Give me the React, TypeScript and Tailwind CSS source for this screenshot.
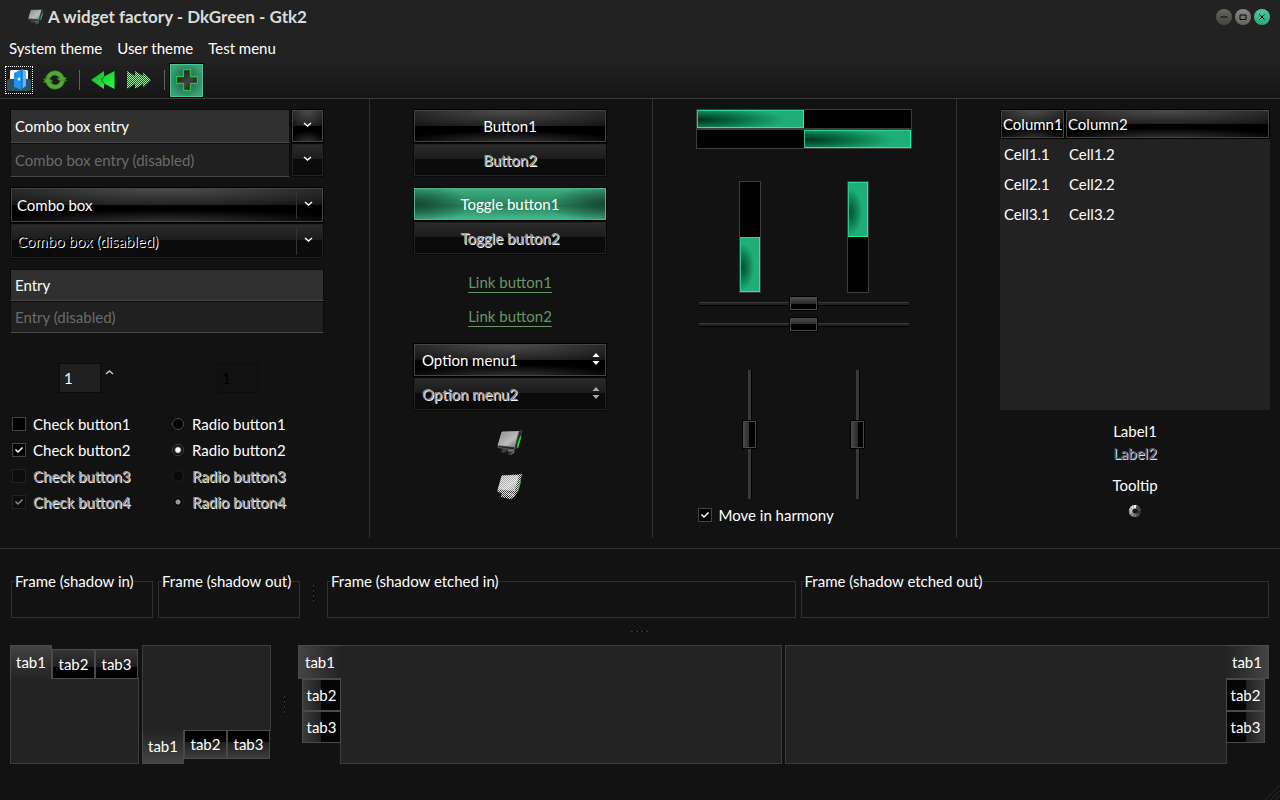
import { useState } from "react";
import type { ReactNode } from "react";
import clsx from "clsx";

const glass =
  "border border-black shadow-[inset_0_0_0_1px_#454545] [background:radial-gradient(ellipse_75%_130%_at_50%_0%,#4e4e4e,#141414)_0_0/100%_50%_no-repeat,radial-gradient(ellipse_60%_70%_at_50%_100%,#333,#000)_0_100%/100%_50%_no-repeat,#000]";
const glassDisabled =
  "border border-[#090909] shadow-[inset_0_0_0_1px_#232323] bg-[linear-gradient(#2c2c2c,#1b1b1b_48%,#0a0a0a_48%,#0b0b0b)]";
const glassGreen =
  "border border-black shadow-[inset_0_0_0_1px_#4db48b] bg-[radial-gradient(ellipse_30%_60%_at_0%_50%,#164531,transparent),radial-gradient(ellipse_30%_60%_at_100%_50%,#164531,transparent),linear-gradient(#3cb083,#2b8a61_50%,#27805a_55%,#44bd8f)]";
const embossed = "text-[#9c9c9c] [text-shadow:1px_1px_0_#f4f4f4]";
const pane = "border border-[#3d3d3d] bg-[#232323]";

function Chevron({ up = false }: { up?: boolean }) {
  return (
    <svg width="9" height="6" viewBox="0 0 9 6" aria-hidden="true" className={up ? "rotate-180" : ""}>
      <path d="M1 1l3.500 3L8 1" fill="none" stroke="currentColor" strokeWidth="1.500" />
    </svg>
  );
}

function MonitorIcon({ size = 28, disabled = false }: { size?: number; disabled?: boolean }) {
  return (
    <svg width={size} height={size} viewBox="0 0 26 26" aria-hidden="true">
      <defs>
        <linearGradient id="screen" x1="0" y1="0" x2="1" y2="1">
          <stop offset="0" stopColor="#8a8a8a" />
          <stop offset="0.6" stopColor="#bdbdbd" />
          <stop offset="1" stopColor="#6a6a6a" />
        </linearGradient>
        <pattern id="checker" width="2" height="2" patternUnits="userSpaceOnUse">
          <path d="M0 0h1v1H0zM1 1h1v1H1z" fill="#e8e8e8" />
        </pattern>
      </defs>
      <path d="M5 19h10l3 1-1 3-4 2-3-1 3-2-3-1-3 2-3-1z" fill="#3c3c3c" />
      <path d="M11 21l5-.5 1 1.500-3 2.500" fill="none" stroke="#8a8a8a" strokeWidth="1" />
      <path d="M5 2l17-.5-4.500 15.500L1 15.500z" fill="url(#screen)" stroke="#c4c4c4" strokeWidth="0.7" />
      <path d="M1 15.500l16.500 1.500-.5 3L1 17.500z" fill="#262626" stroke="#808080" strokeWidth="0.6" />
      <path d="M22 1.500 25 0l-4 17-4 3z" fill="#2c2c2c" stroke="#585858" strokeWidth="0.5" />
      <path d="M23.500 5.500l.8 1.500-2.800 10-1.700 1.500 1-6z" fill={disabled ? "#4e8a55" : "#20d63a"} />
      {disabled && <path d="M5 1.500 25 0l-5 19-3 4-4 2-9-2 1-4-5-1z" fill="url(#checker)" />}
    </svg>
  );
}

function DoorIcon() {
  return (
    <svg width="24" height="24" viewBox="0 0 24 24" aria-hidden="true">
      <rect x="3" y="2" width="18" height="14" rx="1.5" fill="#fff" />
      <rect x="0" y="11" width="24" height="12" rx="2" fill="#33505f" />
      <path d="M7 5l8-4v21l-8-3z" fill="#1c94f4" />
      <path d="M15 1l4 2v15l-4 3z" fill="#5ab6ff" />
      <path d="M15 1v20" stroke="#0b5aa8" strokeWidth="1" />
      <circle cx="12" cy="11" r="1.5" fill="#dff" />
    </svg>
  );
}

function RefreshIcon() {
  return (
    <svg width="24" height="20" viewBox="0 0 24 20" aria-hidden="true">
      <g fill="#54a834" stroke="#2f7a1d" strokeWidth="0.7">
        <path d="M0 9.500 2.500 8.500C4 3 9 0 14 1c3.500.7 6 3.200 7 6.500l2.600.3-3.800 5-6-4.200 2.600-.3C15 5.500 12 4.500 9.500 5.700 8 6.500 7 8 6.800 9.800z" />
        <path d="M24 10.500 21.500 11.500C20 17 15 20 10 19c-3.500-.7-6-3.200-7-6.500l-2.600-.3 3.800-5 6 4.200-2.600.3C9 14.500 12 15.500 14.500 14.300 16 13.500 17 12 17.200 10.200z" />
      </g>
    </svg>
  );
}

function RewindIcon() {
  return (
    <svg width="24" height="20" viewBox="0 0 24 20" aria-hidden="true">
      <defs>
        <linearGradient id="rewind" x1="0" y1="0" x2="1" y2="1">
          <stop offset="0" stopColor="#18b02a" />
          <stop offset="1" stopColor="#2cff48" />
        </linearGradient>
      </defs>
      <path d="M0 10 13 1v5.500L23.500 1v18L13 13.500V19z" fill="url(#rewind)" />
      <path d="M13 6.500 10.500 10l2.500 3.500" fill="none" stroke="#106e1c" strokeWidth="1" />
    </svg>
  );
}

function ForwardIcon() {
  return (
    <svg width="26" height="20" viewBox="0 0 26 20" aria-hidden="true">
      <defs>
        <pattern id="greenChecker" width="2" height="2" patternUnits="userSpaceOnUse">
          <rect width="2" height="2" fill="#1f5c2a" />
          <path d="M0 0h1v1H0zM1 1h1v1H1z" fill="#9fe8a6" />
        </pattern>
      </defs>
      <path d="M1 1l8 5V1l8 5V2.500l8 7.500-8 7.500V14l-8 5v-5l-8 5z" fill="url(#greenChecker)" />
    </svg>
  );
}

function PlusIcon() {
  return (
    <svg width="24" height="24" viewBox="0 0 24 24" aria-hidden="true">
      <defs>
        <linearGradient id="plus" x1="0" y1="0" x2="1" y2="1">
          <stop offset="0" stopColor="#0d0d0d" />
          <stop offset="0.55" stopColor="#444" />
          <stop offset="1" stopColor="#0a0a0a" />
        </linearGradient>
      </defs>
      <path d="M8.500 1.500h7v7h7v7h-7v7h-7v-7h-7v-7h7z" fill="url(#plus)" stroke="#27c043" strokeWidth="1.300" strokeLinejoin="round" />
    </svg>
  );
}

function Spinner() {
  const shades = ["#fff", "#555", "#4a4a4a", "#333", "#555", "#777", "#999", "#bbb", "#ccc", "#ddd"];
  return (
    <svg width="14" height="14" viewBox="0 0 14 14" role="img" aria-label="Loading">
      {shades.map((shade, i) => (
        <path key={i} d="M5.200 1h3.600L7.800 4.500H6.200z" fill={shade} transform={`rotate(${i * 36} 7 7)`} />
      ))}
    </svg>
  );
}

function TitleBar() {
  return (
    <div className="flex h-[34px] items-center pr-2.5 pl-7">
      <MonitorIcon size={16} />
      <h1 className="ml-1 flex-1 text-[17px] font-bold text-[#dcdcdc]">A widget factory - DkGreen - Gtk2</h1>
      <div className="flex gap-[3px]">
        <button aria-label="Minimize" className="grid size-4 place-items-center rounded-full bg-linear-to-b from-[#66665f] to-[#45453f] text-black">
          <svg width="8" height="8" viewBox="0 0 8 8"><path d="M.5 4h7" stroke="currentColor" /></svg>
        </button>
        <button aria-label="Maximize" className="grid size-4 place-items-center rounded-full bg-linear-to-b from-[#8a8a84] to-[#64645e] text-black">
          <svg width="8" height="8" viewBox="0 0 8 8"><path d="M1 2h6v4.500H1z" fill="none" stroke="currentColor" /></svg>
        </button>
        <button aria-label="Close" className="grid size-4 place-items-center rounded-full bg-linear-to-b from-[#48cd9c] to-[#2ba577] text-black">
          <svg width="8" height="8" viewBox="0 0 8 8"><path d="M1.500 1.500l5 5M6.500 1.500l-5 5" stroke="currentColor" /></svg>
        </button>
      </div>
    </div>
  );
}

function Toolbar() {
  return (
    <div className="flex h-9 items-center pl-[5px]">
      <button aria-label="Quit" className="grid size-7 place-items-center border border-dotted border-white">
        <DoorIcon />
      </button>
      <button aria-label="Refresh" className="ml-2.5">
        <RefreshIcon />
      </button>
      <span className="ml-3 h-5 w-px bg-[#606060]" />
      <button aria-label="Rewind" className="ml-[11px]">
        <RewindIcon />
      </button>
      <button aria-label="Forward" disabled className="ml-[11px]">
        <ForwardIcon />
      </button>
      <span className="ml-3 h-5 w-px bg-[#606060]" />
      <button
        aria-label="Add"
        aria-pressed="true"
        className="ml-1 grid size-[35px] place-items-center border border-black bg-[radial-gradient(ellipse_at_50%_50%,#1f6648_20%,#38a279_75%)] shadow-[inset_0_0_0_1px_#4fc397]"
      >
        <PlusIcon />
      </button>
    </div>
  );
}

function ComboEntry({ text, disabled = false }: { text: string; disabled?: boolean }) {
  return (
    <div className="flex h-[34px] gap-px">
      <input
        aria-label={text}
        defaultValue={text}
        disabled={disabled}
        className={clsx(
          "min-w-0 flex-1 border border-[#0a0a0a] border-b-[#484848] px-1 outline-none",
          disabled ? "bg-[#202020] text-[#6b6b6b]" : "bg-[#303030] text-white"
        )}
      />
      <button aria-label="Show options" disabled={disabled} className={clsx("grid w-[33px] place-items-center pb-0.5", disabled ? glassDisabled : glass)}>
        <Chevron />
      </button>
    </div>
  );
}

function ComboBox({ text, disabled = false }: { text: string; disabled?: boolean }) {
  return (
    <div className="relative h-9">
      <select
        aria-label={text}
        disabled={disabled}
        className={clsx(
          "size-full appearance-none px-1.5 opacity-100 outline-none",
          disabled ? glassDisabled : glass,
          disabled ? "text-black [text-shadow:1px_1px_0_#fff]" : "text-white"
        )}
      >
        <option>{text}</option>
      </select>
      <span className="pointer-events-none absolute inset-y-1 right-1 grid w-6 place-items-center border-l border-[#333] pb-0.5">
        <Chevron />
      </span>
    </div>
  );
}

function Entry({ text, disabled = false }: { text: string; disabled?: boolean }) {
  return (
    <input
      aria-label={text}
      defaultValue={text}
      disabled={disabled}
      className={clsx(
        "h-8 w-full border border-[#0a0a0a] border-b-[#484848] px-1 outline-none",
        disabled ? "bg-[#202020] text-[#6b6b6b]" : "bg-[#303030] text-white"
      )}
    />
  );
}

type CheckProps = { label: string; checked?: boolean; disabled?: boolean };

function Check({ label, checked = false, disabled = false }: CheckProps) {
  return (
    <label className="flex h-[26px] items-center gap-[7px]">
      <span className="relative size-3.5">
        <input
          type="checkbox"
          defaultChecked={checked}
          disabled={disabled}
          className={clsx("peer block size-3.5 appearance-none border", disabled ? "border-[#222] bg-[#0d0d0d]" : "border-[#444] bg-black")}
        />
        <svg
          viewBox="0 0 14 14"
          className={clsx("pointer-events-none absolute inset-0 hidden peer-checked:block", disabled ? "text-[#888]" : "text-white")}
        >
          <path d="M3.500 6.500 6 9l4.500-4.500" fill="none" stroke="currentColor" strokeWidth="1.500" />
        </svg>
      </span>
      <span className={disabled ? embossed : ""}>{label}</span>
    </label>
  );
}

function Radio({ label, checked = false, disabled = false }: CheckProps) {
  return (
    <label className="flex h-[26px] items-center gap-2 pl-1">
      <input
        type="radio"
        name={disabled ? "radio-disabled" : "radio"}
        defaultChecked={checked}
        disabled={disabled}
        className={clsx(
          "size-3 appearance-none rounded-full border",
          disabled
            ? "border-[#202020] bg-[#0a0a0a] checked:bg-[radial-gradient(circle,#999_2px,#0a0a0a_3px)]"
            : "border-[#484848] bg-black checked:bg-[radial-gradient(circle,#fff_2px,#000_4px)]"
        )}
      />
      <span className={disabled ? embossed : ""}>{label}</span>
    </label>
  );
}

function EntryColumn() {
  return (
    <section className="border-r border-[#303030] pr-[45px] pb-[23px] pl-2.5">
      <ComboEntry text="Combo box entry" />
      <ComboEntry text="Combo box entry (disabled)" disabled />
      <div className="mt-2.5">
        <ComboBox text="Combo box" />
        <ComboBox text="Combo box (disabled)" disabled />
      </div>
      <div className="mt-2.5">
        <Entry text="Entry" />
        <Entry text="Entry (disabled)" disabled />
      </div>
      <div className="mt-[30px] grid grid-cols-[158px_1fr]">
        <div className="flex h-[30px] gap-1 pl-[49px]">
          <input aria-label="Spin button" defaultValue="1" className="w-[42px] border border-[#0a0a0a] bg-[#202020] px-1 text-white outline-none" />
          <button aria-label="Increase" className="flex pt-1.5 text-[#ccc]">
            <Chevron up />
          </button>
        </div>
        <div className="flex h-[30px] pl-[49px]">
          <input
            aria-label="Spin button (disabled)"
            defaultValue="1"
            disabled
            className="w-[42px] border border-[#0d0d0d] bg-[#111] px-1 text-black"
          />
        </div>
      </div>
      <div className="mt-[18px] grid grid-cols-[158px_1fr]">
        <div className="pl-0.5">
          <Check label="Check button1" />
          <Check label="Check button2" checked />
          <Check label="Check button3" disabled />
          <Check label="Check button4" checked disabled />
        </div>
        <div>
          <Radio label="Radio button1" />
          <Radio label="Radio button2" checked />
          <Radio label="Radio button3" disabled />
          <Radio label="Radio button4" checked disabled />
        </div>
      </div>
    </section>
  );
}

function OptionMenu({ text, disabled = false }: { text: string; disabled?: boolean }) {
  return (
    <div className="relative h-[34px]">
      <select
        aria-label={text}
        disabled={disabled}
        className={clsx(
          "size-full appearance-none px-2 opacity-100 outline-none",
          disabled ? glassDisabled : glass,
          disabled ? embossed : "text-white"
        )}
      >
        <option>{text}</option>
      </select>
      <svg
        width="8"
        height="12"
        viewBox="0 0 8 12"
        className={clsx("pointer-events-none absolute top-2.5 right-[7px]", disabled ? "text-[#aaa]" : "text-white")}
      >
        <path d="M4 0l3.500 4h-7zM4 12L.5 8h7z" fill="currentColor" />
      </svg>
    </div>
  );
}

function ButtonColumn() {
  const [pressed, setPressed] = useState(true);

  return (
    <section className="flex flex-col items-center gap-2.5 border-r border-[#303030] pr-0.5">
      <div className="flex w-[194px] flex-col">
        <button className={clsx("h-[34px]", glass)}>Button1</button>
        <button disabled className={clsx("h-[34px]", glassDisabled, embossed)}>Button2</button>
      </div>
      <div className="flex w-[194px] flex-col">
        <button aria-pressed={pressed} onClick={() => setPressed(!pressed)} className={clsx("h-[34px]", pressed ? glassGreen : glass)}>
          Toggle button1
        </button>
        <button disabled className={clsx("h-[34px]", glassDisabled, embossed)}>Toggle button2</button>
      </div>
      <div className="flex flex-col items-center text-[#659865]">
        <span className="flex h-[34px] items-center">
          <a href="#link1" className="underline underline-offset-4">Link button1</a>
        </span>
        <span className="flex h-[34px] items-center">
          <a href="#link2" className="underline underline-offset-4">Link button2</a>
        </span>
      </div>
      <div className="w-[194px]">
        <OptionMenu text="Option menu1" />
        <OptionMenu text="Option menu2" disabled />
      </div>
      <div>
        <div className="flex h-11 items-center"><MonitorIcon size={26} /></div>
        <div className="flex h-11 items-center"><MonitorIcon size={26} disabled /></div>
      </div>
    </section>
  );
}

function Progress({ label, end = false, vertical = false }: { label: string; end?: boolean; vertical?: boolean }) {
  return (
    <div
      role="progressbar"
      aria-label={label}
      aria-valuenow={50}
      className={clsx("flex border border-[#3d3d3d] bg-[#020202]", vertical ? "h-28 w-[22px] flex-col" : "h-5", end && "justify-end")}
    >
      <div
        className={clsx(
          "border border-[#12f59b] border-t-[#2fd397] border-l-[#2bc98e]",
          vertical
            ? "h-1/2 bg-[radial-gradient(ellipse_75%_45%_at_0%_55%,#05452c,#0a7a4e_50%,#1fae77_100%)]"
            : "w-1/2 bg-[radial-gradient(ellipse_100%_90%_at_0%_55%,#03311e,#0a7549_45%,#1fae77_85%)]"
        )}
      />
    </div>
  );
}

const hRange =
  "block h-[21px] w-full appearance-none bg-transparent bg-[linear-gradient(#3a3a3a_1px,#222_1px,#222_3px,#000_3px)] bg-[length:210px_4px] bg-center bg-no-repeat [&::-webkit-slider-thumb]:h-[15px] [&::-webkit-slider-thumb]:w-[29px] [&::-webkit-slider-thumb]:appearance-none [&::-webkit-slider-thumb]:border [&::-webkit-slider-thumb]:border-black [&::-webkit-slider-thumb]:bg-[linear-gradient(#4d4d4d,#2a2a2a_50%,#000_50%)] [&::-webkit-slider-thumb]:shadow-[inset_0_0_0_1px_#4a4a4a]";
const vRange =
  "block h-[129px] w-[21px] appearance-none bg-transparent bg-[linear-gradient(90deg,#3a3a3a_3px,#000_3px)] bg-[length:4px_100%] bg-center bg-no-repeat [writing-mode:vertical-lr] [&::-webkit-slider-thumb]:h-[29px] [&::-webkit-slider-thumb]:w-[15px] [&::-webkit-slider-thumb]:appearance-none [&::-webkit-slider-thumb]:border [&::-webkit-slider-thumb]:border-black [&::-webkit-slider-thumb]:bg-[linear-gradient(90deg,#4d4d4d,#2a2a2a_50%,#000_50%)] [&::-webkit-slider-thumb]:shadow-[inset_0_0_0_1px_#4a4a4a]";

function RangeColumn() {
  return (
    <section className="flex flex-col items-center border-r border-[#303030] pr-0.5">
      <div className="w-[216px]">
        <Progress label="Left to right" />
        <Progress label="Right to left" end />
        <div className="mt-8 grid grid-cols-2 justify-items-center">
          <Progress label="Bottom to top" vertical end />
          <Progress label="Top to bottom" vertical />
        </div>
        <input type="range" aria-label="Horizontal scale 1" defaultValue="50" className={hRange} />
        <input type="range" aria-label="Horizontal scale 2" defaultValue="50" className={hRange} />
        <div className="mt-[35px] grid grid-cols-2 justify-items-center">
          <input type="range" aria-label="Vertical scale 1" defaultValue="50" className={vRange} />
          <input type="range" aria-label="Vertical scale 2" defaultValue="50" className={vRange} />
        </div>
        <div className="mt-[3px] pl-0.5">
          <Check label="Move in harmony" checked />
        </div>
      </div>
    </section>
  );
}

function TableColumn() {
  return (
    <section className="flex flex-col pr-2.5 pl-[43px]">
      <div className="min-h-[301px] bg-[#222]">
        <table className="w-full table-fixed border-separate border-spacing-0 text-left">
          <thead>
            <tr className="h-[30px]">
              <th className={clsx("w-[65px] px-0.5 font-normal", glass)}>Column1</th>
              <th className={clsx("px-0.5 font-normal", glass)}>Column2</th>
            </tr>
          </thead>
          <tbody>
            {[1, 2, 3].map((row) => (
              <tr key={row} className="h-[30px]">
                <td className="px-1">Cell{row}.1</td>
                <td className="px-1">Cell{row}.2</td>
              </tr>
            ))}
          </tbody>
        </table>
      </div>
      <div className="mt-2.5 flex flex-col items-center leading-[22px]">
        <span>Label1</span>
        <span className="text-[#4d6079] [text-shadow:1px_1px_0_#ddd]">Label2</span>
        <span className="mt-2.5 mb-2">Tooltip</span>
        <Spinner />
      </div>
    </section>
  );
}

function Frame({ title, className }: { title: string; className: string }) {
  return (
    <fieldset className={clsx("h-12 border border-[#303030]", className)}>
      <legend className="ml-[3px] leading-[22px] whitespace-nowrap">{title}</legend>
    </fieldset>
  );
}

function Grip({ className }: { className: string }) {
  return (
    <div className={clsx("grid place-items-center", className)}>
      <span className="block h-[18px] w-px bg-[repeating-linear-gradient(#3a3a3a_0_2px,#000_2px_5px)]" />
    </div>
  );
}

type Side = "top" | "bottom" | "left" | "right";

const layout: Record<Side, string> = {
  top: "flex-col",
  bottom: "flex-col-reverse",
  left: "flex-row",
  right: "flex-row-reverse",
};
const tabList: Record<Side, string> = {
  top: "flex-row items-end -mb-px",
  bottom: "flex-row items-start -mt-px",
  left: "flex-col items-end -mr-px",
  right: "flex-col items-start -ml-px",
};
const tabActive: Record<Side, string> = {
  top: "h-[34px] w-[42px] border-b-0 bg-linear-to-b from-[#444] to-[#232323]",
  bottom: "h-[34px] w-[42px] border-t-0 bg-linear-to-t from-[#444] to-[#232323]",
  left: "h-[34px] w-[43px] border-r-0 bg-linear-to-r from-[#444] to-[#232323]",
  right: "h-[34px] w-[43px] border-l-0 bg-linear-to-l from-[#444] to-[#232323]",
};
const tabIdle: Record<Side, string> = {
  top: "h-[30px] w-[43px] bg-[linear-gradient(#353535,#1f1f1f_60%,#000_60%)]",
  bottom: "h-[29px] w-[43px] bg-[linear-gradient(#000_40%,#1f1f1f_40%,#3c3c3c)]",
  left: "h-8 w-[39px] bg-[linear-gradient(90deg,#3c3c3c,#1f1f1f_50%,#050505_50%)]",
  right: "h-8 w-[39px] bg-[linear-gradient(90deg,#050505_50%,#1f1f1f_50%,#3c3c3c)]",
};

function Notebook({ side, className, children }: { side: Side; className: string; children?: ReactNode }) {
  const [active, setActive] = useState("tab1");

  return (
    <div className={clsx("flex h-[119px]", layout[side], className)}>
      <div role="tablist" className={clsx("z-10 flex shrink-0", tabList[side])}>
        {["tab1", "tab2", "tab3"].map((tab) => (
          <button
            key={tab}
            role="tab"
            aria-selected={tab === active}
            onClick={() => setActive(tab)}
            className={clsx("border border-[#4a4a4a] text-center", tab === active ? tabActive[side] : tabIdle[side])}
          >
            {tab}
          </button>
        ))}
      </div>
      <div role="tabpanel" className={clsx("flex-1", pane)}>
        {children}
      </div>
    </div>
  );
}

export default function App() {
  return (
    <div className="flex min-h-screen flex-col bg-[#121212] font-['Lato',sans-serif] text-[15px] text-white">
      <header className="border-b border-[#3a3a3a] bg-[linear-gradient(#222_60%,#161616)]">
        <TitleBar />
        <nav className="flex h-7 items-center gap-[15px] pl-[9px]">
          <button>System theme</button>
          <button>User theme</button>
          <button>Test menu</button>
        </nav>
        <Toolbar />
      </header>

      <main className="flex-1">
        <div className="grid grid-cols-[370fr_283fr_304fr_323fr] border-b border-[#303030] pb-2.5 *:pt-2.5">
          <EntryColumn />
          <ButtonColumn />
          <RangeColumn />
          <TableColumn />
        </div>

        <div className="flex px-[11px] pt-[21px]">
          <Frame title="Frame (shadow in)" className="mr-[5px] w-[142px]" />
          <Frame title="Frame (shadow out)" className="w-[142px]" />
          <Grip className="w-[27px]" />
          <Frame title="Frame (shadow etched in)" className="mr-[5px] flex-1" />
          <Frame title="Frame (shadow etched out)" className="flex-1" />
        </div>

        <div className="grid h-[27px] place-items-center">
          <span className="block h-px w-[18px] bg-[repeating-linear-gradient(90deg,#3a3a3a_0_2px,#000_2px_5px)]" />
        </div>

        <div className="flex pr-[11px] pl-2.5">
          <Notebook side="top" className="mr-[3px] w-[129px]" />
          <Notebook side="bottom" className="w-[129px]" />
          <Grip className="w-[27px]" />
          <Notebook side="left" className="mr-[3px] flex-1" />
          <Notebook side="right" className="flex-1" />
        </div>
      </main>

      <svg width="15" height="15" viewBox="0 0 15 15" className="self-end" aria-hidden="true">
        <path d="M0 15 15 0M5 15 15 5M10 15l5-5" stroke="#2a2a2a" strokeWidth="1" />
      </svg>
    </div>
  );
}
